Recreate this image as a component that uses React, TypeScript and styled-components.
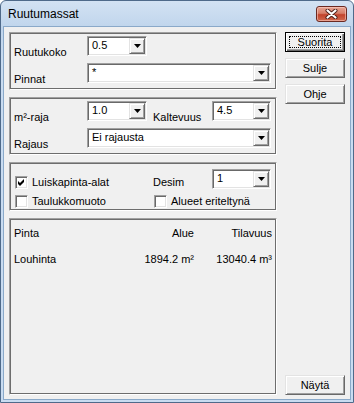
import React from "react";
import styled, { createGlobalStyle } from "styled-components";

const Global = createGlobalStyle`
  html, body { margin: 0; padding: 0; background: #ffffff; }
  body {
    font-family: "Liberation Sans", Arial, sans-serif;
    font-size: 11px;
    color: #000;
  }
  #root { width: 354px; height: 403px; }
`;

const Window = styled.div`
  width: 354px;
  height: 403px;
  box-sizing: border-box;
  display: flex;
  flex-direction: column;
  border: 1px solid #4f6a8a;
  border-radius: 6px 6px 0 0;
  padding: 0 2px 2px 2px;
  background: linear-gradient(#d3e2f3, #c0d5ec 26px, #c9dcf1 60px, #c9dcf1);
`;

const TitleBar = styled.div`
  height: 25px;
  flex: none;
  display: flex;
  align-items: center;
  justify-content: space-between;
  padding: 0 4px 0 5px;
`;

const Title = styled.div`
  font-family: "Liberation Sans", Arial, sans-serif;
  font-size: 12px;
  color: #000;
  padding-top: 1px;
`;

const CloseButton = styled.div`
  width: 31px;
  height: 16px;
  box-sizing: border-box;
  border: 1px solid #6b2a22;
  border-radius: 3px;
  background: linear-gradient(#e7a795, #d67d68 45%, #c2432c 55%, #cf6a4f);
  box-shadow: inset 0 0 0 1px rgba(255, 210, 200, 0.55);
  display: flex;
  align-items: center;
  justify-content: center;
  margin-top: 1px;
`;

const Client = styled.div`
  flex: 1;
  display: flex;
  gap: 8px;
  background: #f0f0f0;
  border: 1px solid #8aa9c9;
  padding: 5px 5px 4px 5px;
  min-height: 0;
`;

const LeftColumn = styled.div`
  width: 268px;
  flex: none;
  display: flex;
  flex-direction: column;
  gap: 7px;
`;

const Group = styled.div<{ $grow?: boolean }>`
  box-sizing: border-box;
  border: 1px solid;
  border-color: #a0a0a0 #ffffff #ffffff #a0a0a0;
  box-shadow: inset 1px 1px 0 #6d6d6d, inset -1px -1px 0 #6d6d6d;
  padding: 1px;
  flex: ${(p) => (p.$grow ? "1" : "none")};
`;

const FormGrid = styled.div<{ $rows?: string; $pt?: number; $pb?: number; $gap?: number }>`
  display: grid;
  grid-template-columns: 73px 60px 6px 59px 59px;
  grid-template-rows: ${(p) => p.$rows ?? "20px 20px"};
  row-gap: ${(p) => p.$gap ?? 7}px;
  padding: ${(p) => p.$pt ?? 2}px 4px ${(p) => p.$pb ?? 5}px 3px;
`;

const Label = styled.div<{ $col?: number; $drop?: number }>`
  grid-column: ${(p) => p.$col ?? 1};
  align-self: end;
  line-height: 13px;
  margin-bottom: -${(p) => p.$drop ?? 3}px;
  white-space: nowrap;
`;

const ComboBox = styled.div<{ $col: string }>`
  grid-column: ${(p) => p.$col};
  height: 20px;
  box-sizing: border-box;
  display: flex;
  background: #ffffff;
  border: 1px solid;
  border-color: #a0a0a0 #ffffff #ffffff #a0a0a0;
  box-shadow: inset 1px 1px 0 #696969, inset -1px -1px 0 #e3e3e3;
  padding: 1px;
`;

const ComboText = styled.div`
  flex: 1;
  padding-left: 3px;
  line-height: 15px;
  white-space: nowrap;
  overflow: hidden;
`;

const DropButton = styled.div`
  width: 16px;
  flex: none;
  box-sizing: border-box;
  background: #f0f0f0;
  border: 1px solid;
  border-color: #e3e3e3 #696969 #696969 #e3e3e3;
  box-shadow: inset 1px 1px 0 #ffffff, inset -1px -1px 0 #a0a0a0;
  display: flex;
  align-items: center;
  justify-content: center;
`;

const CheckRow = styled.label<{ $col: string; $align?: string }>`
  grid-column: ${(p) => p.$col};
  align-self: ${(p) => p.$align ?? "center"};
  display: flex;
  align-items: center;
  gap: 4px;
  padding-left: 1px;
  line-height: 13px;
  white-space: nowrap;
`;

const CheckBox = styled.span`
  width: 13px;
  height: 13px;
  box-sizing: border-box;
  flex: none;
  background: #ffffff;
  border: 1px solid;
  border-color: #a0a0a0 #ffffff #ffffff #a0a0a0;
  box-shadow: inset 1px 1px 0 #696969, inset -1px -1px 0 #e3e3e3;
  display: flex;
  align-items: center;
  justify-content: center;
`;

const ResultGrid = styled.div`
  display: grid;
  grid-template-columns: 120px 60px 78px;
  grid-auto-rows: 13px;
  row-gap: 13px;
  padding: 7px 3px 0 3px;
  line-height: 13px;
`;

const Cell = styled.div<{ $right?: boolean }>`
  text-align: ${(p) => (p.$right ? "right" : "left")};
  white-space: nowrap;
`;

const ButtonColumn = styled.div`
  width: 60px;
  flex: none;
  display: flex;
  flex-direction: column;
  gap: 6px;
`;

const PushButton = styled.div<{ $default?: boolean; $bottom?: boolean }>`
  position: relative;
  height: 20px;
  box-sizing: border-box;
  flex: none;
  display: flex;
  align-items: center;
  justify-content: center;
  background: #f0f0f0;
  line-height: 13px;
  margin-top: ${(p) => (p.$bottom ? "auto" : "0")};
  border: 1px solid;
  border-color: ${(p) =>
    p.$default ? "#000000" : "#e3e3e3 #696969 #696969 #e3e3e3"};
  box-shadow: ${(p) =>
    p.$default
      ? "inset 1px 1px 0 #ffffff, inset -1px -1px 0 #696969, inset -2px -2px 0 #a0a0a0"
      : "inset 1px 1px 0 #ffffff, inset -1px -1px 0 #a0a0a0"};
`;

const FocusRing = styled.span`
  position: absolute;
  inset: 3px 3px 3px 3px;
  border: 1px dotted #000;
  pointer-events: none;
`;

const Arrow = () => (
  <svg width="7" height="4" viewBox="0 0 7 4">
    <polygon points="0,0 7,0 3.5,4" fill="#000" />
  </svg>
);

const Combo = ({ col, value }: { col: string; value: string }) => (
  <ComboBox $col={col}>
    <ComboText>{value}</ComboText>
    <DropButton>
      <Arrow />
    </DropButton>
  </ComboBox>
);

const Check = ({ checked }: { checked?: boolean }) => (
  <CheckBox>
    {checked && (
      <svg width="7" height="7" viewBox="0 0 7 7">
        <polygon points="0,2 2,4 6,0 6,3 2,7 0,5" fill="#000" />
      </svg>
    )}
  </CheckBox>
);

export default function App() {
  return (
    <>
      <Global />
      <Window>
        <TitleBar>
          <Title>Ruutumassat</Title>
          <CloseButton>
            <svg width="13" height="10" viewBox="0 0 13 10">
              <path d="M2.5 1.5 L10.5 8.5 M10.5 1.5 L2.5 8.5" stroke="#4a1d17" strokeWidth="4" strokeLinecap="round" />
              <path d="M2.5 1.5 L10.5 8.5 M10.5 1.5 L2.5 8.5" stroke="#ffffff" strokeWidth="2.2" strokeLinecap="round" />
            </svg>
          </CloseButton>
        </TitleBar>
        <Client>
          <LeftColumn>
            <Group>
              <FormGrid>
                <Label>Ruutukoko</Label>
                <Combo col="2" value="0.5" />
                <Label>Pinnat</Label>
                <Combo col="2 / 6" value="*" />
              </FormGrid>
            </Group>
            <Group>
              <FormGrid>
                <Label>m²-raja</Label>
                <Combo col="2" value="1.0" />
                <Label $col={4}>Kaltevuus</Label>
                <Combo col="5" value="4.5" />
                <Label>Rajaus</Label>
                <Combo col="2 / 6" value="Ei rajausta" />
              </FormGrid>
            </Group>
            <Group>
              <FormGrid $rows="20px 15px" $pt={5} $pb={0} $gap={5}>
                <CheckRow $col="1 / 3" $align="end">
                  <Check checked />
                  Luiskapinta-alat
                </CheckRow>
                <Label $col={4} $drop={0}>Desim</Label>
                <Combo col="5" value="1" />
                <CheckRow $col="1 / 3">
                  <Check />
                  Taulukkomuoto
                </CheckRow>
                <CheckRow $col="4 / 6">
                  <Check />
                  Alueet eriteltynä
                </CheckRow>
              </FormGrid>
            </Group>
            <Group $grow>
              <ResultGrid>
                <Cell>Pinta</Cell>
                <Cell $right>Alue</Cell>
                <Cell $right>Tilavuus</Cell>
                <Cell>Louhinta</Cell>
                <Cell $right>1894.2 m²</Cell>
                <Cell $right>13040.4 m³</Cell>
              </ResultGrid>
            </Group>
          </LeftColumn>
          <ButtonColumn>
            <PushButton $default>
              Suorita
              <FocusRing />
            </PushButton>
            <PushButton>Sulje</PushButton>
            <PushButton>Ohje</PushButton>
            <PushButton $bottom>Näytä</PushButton>
          </ButtonColumn>
        </Client>
      </Window>
    </>
  );
}
